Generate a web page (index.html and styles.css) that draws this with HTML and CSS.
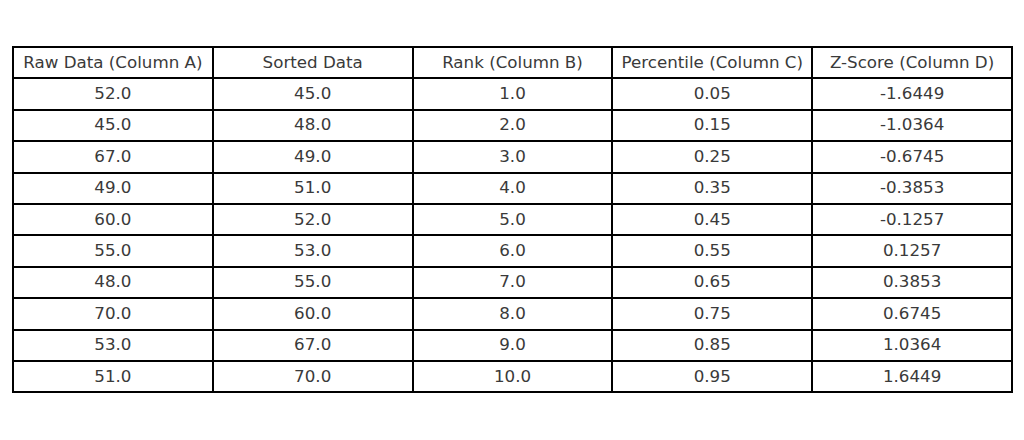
FILE: index.html
```html
<!DOCTYPE html>
<html>
<head>
<meta charset="utf-8">
<link rel="stylesheet" href="styles.css">
</head>
<body>
<div class="page">
<div class="grid">
<div class="c">Raw Data (Column A)</div><div class="c">Sorted Data</div><div class="c">Rank (Column B)</div><div class="c">Percentile (Column C)</div><div class="c">Z-Score (Column D)</div>
<div class="c">52.0</div><div class="c">45.0</div><div class="c">1.0</div><div class="c">0.05</div><div class="c">-1.6449</div>
<div class="c">45.0</div><div class="c">48.0</div><div class="c">2.0</div><div class="c">0.15</div><div class="c">-1.0364</div>
<div class="c">67.0</div><div class="c">49.0</div><div class="c">3.0</div><div class="c">0.25</div><div class="c">-0.6745</div>
<div class="c">49.0</div><div class="c">51.0</div><div class="c">4.0</div><div class="c">0.35</div><div class="c">-0.3853</div>
<div class="c">60.0</div><div class="c">52.0</div><div class="c">5.0</div><div class="c">0.45</div><div class="c">-0.1257</div>
<div class="c">55.0</div><div class="c">53.0</div><div class="c">6.0</div><div class="c">0.55</div><div class="c">0.1257</div>
<div class="c">48.0</div><div class="c">55.0</div><div class="c">7.0</div><div class="c">0.65</div><div class="c">0.3853</div>
<div class="c">70.0</div><div class="c">60.0</div><div class="c">8.0</div><div class="c">0.75</div><div class="c">0.6745</div>
<div class="c">53.0</div><div class="c">67.0</div><div class="c">9.0</div><div class="c">0.85</div><div class="c">1.0364</div>
<div class="c">51.0</div><div class="c">70.0</div><div class="c">10.0</div><div class="c">0.95</div><div class="c">1.6449</div>
</div>
</div>
</body>
</html>
```
FILE: styles.css
```css
html, body {
  margin: 0;
  padding: 0;
  background: #fff;
}
.page {
  padding: 46px 0 0 12px;
}
.grid {
  display: grid;
  grid-template-columns: repeat(5, 199.8px);
  grid-template-rows: repeat(11, 31.4px);
  width: 1001px;
  border-top: 2px solid #000;
  border-left: 2px solid #000;
  box-sizing: border-box;
  font-family: "DejaVu Sans", sans-serif;
  font-size: 16.7px;
  color: #3a3a3a;
}
.c {
  border-right: 2px solid #000;
  border-bottom: 2px solid #000;
  display: flex;
  align-items: center;
  justify-content: center;
  white-space: nowrap;
  padding-bottom: 2px;
}
```
